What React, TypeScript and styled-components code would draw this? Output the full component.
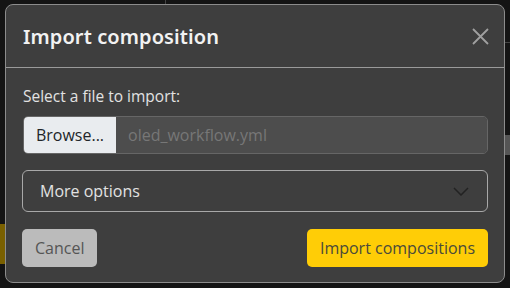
import React from "react";
import styled, { createGlobalStyle } from "styled-components";

const Global = createGlobalStyle`
  html, body { margin: 0; padding: 0; background: #141414; }
  body { font-family: "Open Sans", "Noto Sans", sans-serif; overflow: hidden; }
`;

const Stage = styled.div`
  position: relative;
  width: 510px;
  height: 288px;
  padding: 4px 0 0 5px;
  box-sizing: border-box;
`;

const Backdrop = styled.div`
  position: absolute;
  inset: 0;
  pointer-events: none;
`;

const Streak = styled.div<{ $x: number; $y: number; $w: number; $h: number; $c: string }>`
  position: absolute;
  left: ${(p) => p.$x}px;
  top: ${(p) => p.$y}px;
  width: ${(p) => p.$w}px;
  height: ${(p) => p.$h}px;
  background: ${(p) => p.$c};
`;

const Modal = styled.div`
  position: relative;
  width: 500px;
  height: 279px;
  box-sizing: border-box;
  background: #3e3e3e;
  border: 1px solid #8c8c8c;
  border-radius: 8px;
  display: flex;
  flex-direction: column;
  overflow: hidden;
`;

const Header = styled.div`
  height: 63px;
  box-sizing: border-box;
  border-bottom: 1px solid #9a9a9a;
  display: flex;
  align-items: center;
  justify-content: space-between;
  padding: 0 14px 0 17px;
`;

const Title = styled.h1`
  margin: 0;
  font-family: "Noto Sans", "Open Sans", sans-serif;
  font-weight: 600;
  font-size: 20px;
  color: #f2f2f2;
  letter-spacing: 0.1px;
`;

const Close = styled.button`
  border: 0;
  background: none;
  padding: 0;
  width: 20px;
  height: 20px;
  display: flex;
  align-items: center;
  justify-content: center;
  cursor: pointer;
`;

const Body = styled.div`
  padding: 18px 16px 0 16px;
  display: flex;
  flex-direction: column;
`;

const Label = styled.div`
  font-size: 15.5px;
  line-height: 21px;
  color: #e2e2e2;
  padding-left: 1px;
  margin-bottom: 9px;
`;

const FileGroup = styled.div`
  display: flex;
  height: 38px;
  border-radius: 5px;
  overflow: hidden;
  border: 1px solid #666;
  box-sizing: border-box;
  margin-left: 1px;
`;

const BrowseBtn = styled.div`
  width: 92px;
  background: #e9ecef;
  color: #212529;
  font-size: 16px;
  display: flex;
  align-items: center;
  justify-content: center;
`;

const FileName = styled.div`
  flex: 1;
  background: #4d4d4d;
  color: #777;
  font-size: 16px;
  display: flex;
  align-items: center;
  padding-left: 12px;
`;

const Select = styled.div`
  margin-top: 16px;
  height: 42px;
  box-sizing: border-box;
  border: 1px solid #a8a8a8;
  border-radius: 6px;
  display: flex;
  align-items: center;
  justify-content: space-between;
  padding: 0 18px 0 17px;
  color: #e2e2e2;
  font-size: 16px;
`;

const Footer = styled.div`
  margin-top: 17px;
  display: flex;
  justify-content: space-between;
`;

const Btn = styled.button<{ $primary?: boolean }>`
  height: 38px;
  border: 0;
  border-radius: 5px;
  font-family: "Open Sans", "Noto Sans", sans-serif;
  font-size: 16px;
  padding: 0 13px;
  white-space: nowrap;
  background: ${(p) => (p.$primary ? "#ffcd06" : "#bbbbbb")};
  color: ${(p) => (p.$primary ? "#4a4a3a" : "#555555")};
  min-width: ${(p) => (p.$primary ? "181px" : "75px")};
  cursor: pointer;
`;

export default function App() {
  return (
    <>
      <Global />
      <Stage>
        <Backdrop>
          <Streak $x={0} $y={224} $w={5} $h={40} $c="#7a6000" />
          <Streak $x={505} $y={42} $w={5} $h={1} $c="#444" />
          <Streak $x={505} $y={135} $w={5} $h={20} $c="#555" />
          <Streak $x={165} $y={0} $w={1} $h={4} $c="#444" />
        </Backdrop>
        <Modal>
          <Header>
            <Title>Import composition</Title>
            <Close aria-label="Close">
              <svg width="17" height="17" viewBox="0 0 17 17">
                <path d="M1 1 L16 16 M16 1 L1 16" stroke="#a0a0a0" strokeWidth="1.8" />
              </svg>
            </Close>
          </Header>
          <Body>
            <Label>Select a file to import:</Label>
            <FileGroup>
              <BrowseBtn>Browse...</BrowseBtn>
              <FileName>oled_workflow.yml</FileName>
            </FileGroup>
            <Select>
              <span>More options</span>
              <svg width="16" height="9" viewBox="0 0 16 9">
                <path d="M1 1 L8 8 L15 1" fill="none" stroke="#222" strokeWidth="1.5" />
              </svg>
            </Select>
            <Footer>
              <Btn>Cancel</Btn>
              <Btn $primary>Import compositions</Btn>
            </Footer>
          </Body>
        </Modal>
      </Stage>
    </>
  );
}
